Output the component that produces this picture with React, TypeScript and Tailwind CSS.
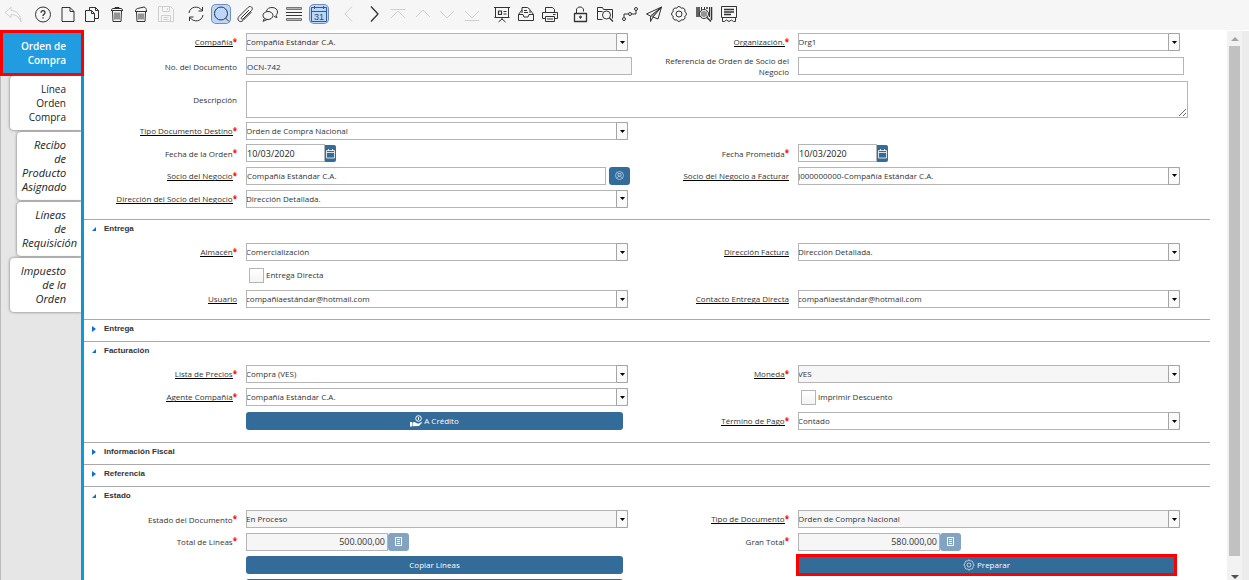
import type { ReactNode } from 'react'
import clsx from 'clsx'

const icons = {
    undo: <path d="M7 2 1 7.5 7 12.5V9.5c4 0 7.500 1.500 10 7.500C17 10.500 13 5.500 7 5.500z" />,
    help: (
        <>
            <circle cx="9" cy="9.500" r="7.500" />
            <path d="M7 7.800c0-3 4.200-2.700 4 0-.1 1.500-2 1.500-2 3.200M9 12.300v1.200" strokeWidth="1.300" />
        </>
    ),
    file: <path d="M3 2.500h8l4 4v10H3zM11 2.500v4h4" />,
    copy: (
        <>
            <path d="M2.500 5.500h6l3 3v8h-9zM8.500 5.500v3h3" />
            <path d="M6.500 5.500v-3h6l3 3v8h-4M12.500 2.500v3h3" />
        </>
    ),
    trash: (
        <>
            <path d="M3 5.500h12M4.500 5.500l.5 11h8l.5-11M3.500 5.500c0-1.500.500-2 1.500-2h8c1 0 1.500.5 1.500 2M7 3.500v-1h4v1" />
            <path d="M7 7.500v7M9 7.500v7M11 7.500v7" />
        </>
    ),
    trashFull: (
        <>
            <path d="M3 6.500h12M4.500 6.500l.5 10h8l.5-10M3.500 6c0-1.500 1-2 2-2.500L12 2c1.500 0 2.500 2 2.500 4" />
            <path d="M7 8.500v6M9 8.500v6M11 8.500v6" />
        </>
    ),
    save: (
        <>
            <path d="M1.500 1.500h12l3 3v12h-15z" />
            <path d="M5.500 1.500v5h7v-5M10.500 3v2M4.500 16.500v-6h9v6M6.500 12.500h5M6.500 14.500h5" />
        </>
    ),
    refresh: (
        <>
            <path d="M2 8c.8-6.500 9.500-8 13-2.500M16 10c-.8 6.500-9.500 8-13 2.500" />
            <path d="M15.500 2v4h-4M2.500 16v-4h4" />
        </>
    ),
    search: (
        <>
            <circle cx="9" cy="8.500" r="6.500" />
            <path d="m13.500 13 3.500 3.500" />
        </>
    ),
    clip: <path d="m13 5-7.500 7.500c-1 1 .500 2.500 1.500 1.500l8.500-8.500c2.500-2.500-1-5.500-3.300-3.200L3 11.500c-3 3 1 7 4 4l8.500-8.500" />,
    chat: (
        <>
            <path d="M5.500 6C6 3.500 8.500 2.500 11 2.500c3.500 0 5.500 2 5.500 4.500 0 1.500-.700 2.500-1.500 3.200l1 2.300-3-1" />
            <ellipse cx="7" cy="10.500" rx="5" ry="4" />
            <path d="m3.500 13.300-1.500 3 4-1.700" />
        </>
    ),
    list: (
        <>
            <path d="M1.500 2.500h15v2h-15zM1.500 13.500h15v2h-15z" fill="#b5b5b5" stroke="#777" />
            <path d="M1 7.500h16M1 10.500h16" />
        </>
    ),
    calendar: (
        <>
            <path d="M1.500 2.500h15v14h-15zM1.500 6.500h15M4.500 1v3M13.500 1v3" stroke="#365b8c" />
            <text x="9" y="15" textAnchor="middle" fontSize="9" fill="#2f4a70" stroke="none" fontFamily="Liberation Sans">31</text>
        </>
    ),
    prev: <path d="M12 1.500 5 9l7 7.500" />,
    next: <path d="m6 1.500 7 7.500-7 7.500" strokeWidth="1.300" />,
    first: <path d="M1.500 4.500h15M2 13l7-7 7 7" />,
    up: <path d="m2 12 7-7 7 7" />,
    down: <path d="m2 6 7 7 7-7" />,
    last: <path d="M1.500 15.500h15M2 6l7 7 7-7" />,
    board: (
        <>
            <path d="M1 2.500h16M2.500 3v9.500h13V3M1.500 12.500h15M9 12.500v2M5.500 17l3.500-3 3.500 3" />
            <path d="M5.500 6h3v3.500h-3zM10.500 6.500h3M10.500 9h3" strokeWidth="1.200" />
        </>
    ),
    inbox: (
        <>
            <path d="M1.500 9.500h4.500l1 2.500h4l1-2.500h4.500v6h-15zM1.500 9.500l3-4h1M16.500 9.500l-3-4" />
            <path d="M5 8V2.500h5.500l2.500 2V8M7 5.500h3M7 7.500h4" />
        </>
    ),
    printer: (
        <>
            <path d="M4.500 7V2.500h7l2 2V7M4 13.500H1.500v-6h15v6H14M3 7.500h12" />
            <path d="M4.500 11.500h9v5h-9zM6 14h6M12 9.500h2.500" />
        </>
    ),
    lock: (
        <>
            <path d="M3.500 8.500h12v8h-12z" strokeWidth="1.300" />
            <path d="M5.500 8.500V5c0-4 7-4 7 0v1.500M9.500 11.500v2" />
            <circle cx="9.500" cy="12" r="1" />
        </>
    ),
    folder: (
        <>
            <path d="M1.500 14.500v-12h5l1 2h9v9M1.500 14.500h5M1.500 6.500h5" />
            <circle cx="10.500" cy="10" r="4" />
            <path d="m13.500 13 3.500 3.500" strokeWidth="1.300" />
        </>
    ),
    flow: (
        <>
            <circle cx="3" cy="14" r="1.500" />
            <circle cx="9" cy="9" r="1.500" />
            <circle cx="15" cy="4" r="1.500" />
            <path d="M3 12.500V9h4.500M10.500 9H15V5.500" />
        </>
    ),
    plane: <path d="M16.500 2 1.500 9l4 2zM16.500 2 13 14l-5-2zM5.500 11v5.500l2.500-4.500M16.500 2 6.500 12" />,
    gear: (
        <>
            <path d="M14.730 6.630a2.500 2.500 0 0 1 0 4.740 2.500 2.500 0 0 1-3.360 3.360 2.500 2.500 0 0 1-4.740 0 2.500 2.500 0 0 1-3.360-3.360 2.500 2.500 0 0 1 0-4.740 2.500 2.500 0 0 1 3.360-3.360 2.500 2.500 0 0 1 4.740 0 2.500 2.500 0 0 1 3.360 3.360z" />
            <circle cx="9" cy="9" r="3" />
        </>
    ),
    barcode: (
        <>
            <path d="M2 2v10M4 2v10M12 2v2M16.500 2v13" strokeWidth="1.500" />
            <path d="M6.500 2v3M9.500 2v2M14.500 2v10" />
            <circle cx="9" cy="9" r="4.500" />
            <path d="M7 6.500v5M9 6v6M11 6.500v5" />
            <path d="m12 12.500 4 4" strokeWidth="1.500" />
        </>
    ),
    receipt: (
        <>
            <path d="M1.500 1.500h15v11h-15zM2.500 12.500v4h2l2-1.500 2.500 1.500 2.500-1.500 2 1.500h2v-4" />
            <path d="M4 4.500h10M4 7h10M4 9.500h7" strokeWidth="1.500" />
        </>
    ),
}

type IconName = keyof typeof icons
type Tool = [IconName, string, ('off' | 'on')?]

const toolbar: { width: string; tools: Tool[] }[] = [
    { width: 'w-6', tools: [['undo', 'Deshacer', 'off']] },
    {
        width: 'w-[147px]',
        tools: [
            ['help', 'Ayuda'], ['file', 'Nuevo'], ['copy', 'Copiar'],
            ['trash', 'Eliminar'], ['trashFull', 'Eliminar selección'], ['save', 'Guardar', 'off'],
        ],
    },
    {
        width: 'w-[147px]',
        tools: [
            ['refresh', 'Refrescar'], ['search', 'Buscar', 'on'], ['clip', 'Adjunto'],
            ['chat', 'Chat'], ['list', 'Cuadrícula'], ['calendar', 'Calendario', 'on'],
        ],
    },
    {
        width: 'w-[147px]',
        tools: [
            ['prev', 'Padre', 'off'], ['next', 'Detalle'], ['first', 'Primero', 'off'],
            ['up', 'Anterior', 'off'], ['down', 'Siguiente', 'off'], ['last', 'Último', 'off'],
        ],
    },
    { width: 'w-[72px]', tools: [['board', 'Informe'], ['inbox', 'Archivo'], ['printer', 'Imprimir']] },
    {
        width: 'w-[173px]',
        tools: [
            ['lock', 'Bloquear'], ['folder', 'Acercar'], ['flow', 'Flujo'], ['plane', 'Solicitud'],
            ['gear', 'Proceso'], ['barcode', 'Producto'], ['receipt', 'Recibo'],
        ],
    },
]

const tabs = [
    { name: 'Línea Orden Compra', className: 'ml-[10px]' },
    { name: 'Recibo de Producto Asignado', className: 'ml-[17px] text-[11px] italic' },
    { name: 'Líneas de Requisición', className: 'ml-[17px] text-[11px] italic' },
    { name: 'Impuesto de la Orden', className: 'ml-[10px] text-[11px] italic' },
]

function Icon({ name, className }: { name: IconName; className?: string }) {
    return (
        <svg viewBox="0 0 18 18" className={clsx('shrink-0', className)} fill="none" stroke="currentColor" strokeLinejoin="round">
            {icons[name]}
        </svg>
    )
}

function Toolbar() {
    return (
        <header className="flex h-[30px] shrink-0 items-center gap-[6px] bg-[#f6f6f6] pb-[2px] pl-px">
            {toolbar.map((group, i) => (
                <div key={i} className={clsx('flex justify-between', group.width)}>
                    {group.tools.map(([name, title, state]) => (
                        <button
                            key={name}
                            type="button"
                            aria-label={title}
                            disabled={state === 'off'}
                            className="flex h-6 w-6 items-center justify-center text-[#333] disabled:text-[#cfcfcf]"
                        >
                            <span className={clsx('rounded-sm', state === 'on' && 'bg-[#bdd7fb] ring-1 ring-[#6d8fbf]')}>
                                <Icon name={name} className="h-[18px] w-[18px]" />
                            </span>
                        </button>
                    ))}
                </div>
            ))}
        </header>
    )
}

function Sidebar() {
    return (
        <nav className="flex w-[84px] shrink-0 flex-col border-r-[3px] border-[#0a9bd8] bg-[#e6e6e6] text-right text-[10px] leading-[14px] text-[#222]">
            <button type="button" className="relative -mr-[3px] border-[3px] border-[#fa0000] bg-[#229ce0] py-[6px] pr-[15px] pl-3 text-right font-semibold text-white">
                Orden de Compra
            </button>
            <div className="flex flex-1 flex-col gap-[2px] border-l border-[#bbb]">
                {tabs.map((tab) => (
                    <button
                        key={tab.name}
                        type="button"
                        className={clsx('-translate-x-px -mr-px rounded-l-[4px] bg-white py-[6px] pr-[15px] pl-[5px] text-right shadow-[0_0_3px_#666]', tab.className)}
                    >
                        {tab.name}
                    </button>
                ))}
            </div>
        </nav>
    )
}

function Field({ id, label, link, required, className, children }: {
    id?: string
    label?: string
    link?: boolean
    required?: boolean
    className?: string
    children?: ReactNode
}) {
    return (
        <div className={clsx('flex items-center gap-[9px] pl-6', className)}>
            <label htmlFor={id} className="flex w-[129px] shrink-0 justify-end text-right leading-[11px]">
                <span className={clsx(link && 'border-b border-black leading-[9px]')}>{label}</span>
                {required && <span className="-mt-px font-bold text-[#f00]">*</span>}
            </label>
            <div className="flex min-w-0 flex-1 items-center">{children}</div>
        </div>
    )
}

const box = 'h-[18px] border border-[#b5b5b5] bg-white text-[#333] outline-none read-only:bg-[#f6f6f6]'

function Combo({ id, value, disabled }: { id: string; value: string; disabled?: boolean }) {
    return (
        <div className="relative mr-2 flex-1">
            <select
                id={id}
                disabled={disabled}
                className="block h-[18px] w-full appearance-none border border-[#b5b5b5] bg-white pr-3 -indent-px text-[#333] disabled:bg-[#f6f6f6] disabled:opacity-100"
            >
                <option>{value}</option>
            </select>
            <span className="pointer-events-none absolute top-0 right-0 flex h-[18px] w-3 items-center justify-center rounded-r-[2px] border border-[#a5a5a5] bg-[#fafafa]">
                <svg viewBox="0 0 5 3" className="h-[3px] w-[5px]"><path d="M0 0h5L2.500 3z" /></svg>
            </span>
        </div>
    )
}

function DateBox({ id }: { id: string }) {
    return (
        <>
            <input id={id} defaultValue="10/03/2020" className="h-[18px] w-[79px] border border-[#b5b5b5] text-[9px] text-[#222]" />
            <button type="button" aria-label="Abrir calendario" className="flex h-[17px] w-[11px] items-center justify-center rounded-r-[2px] bg-[#336b99] text-white">
                <svg viewBox="0 0 9 11" className="h-[11px] w-[9px]" fill="none" stroke="currentColor" strokeWidth=".8">
                    <path d="M.5 2.500h8v7.500h-8zM.5 4.500h8M2.500 1v2M6.500 1v2" />
                </svg>
            </button>
        </>
    )
}

function Amount({ id, value }: { id: string; value: string }) {
    return (
        <>
            <input id={id} readOnly defaultValue={value} className={clsx(box, 'w-[142px] pr-[2px] text-right text-[9px]')} />
            <button type="button" disabled aria-label="Calculadora" className="flex h-[18px] w-[21px] items-center justify-center rounded-[3px] bg-[#82a4c2] text-white">
                <svg viewBox="0 0 8 9" className="h-[9px] w-2" fill="none" stroke="currentColor">
                    <path d="M.5.5h6v8h-6zM2 2.500h3M2 4.500h3M2 6.500h3" />
                </svg>
            </button>
        </>
    )
}

function Action({ children, className, label }: { children?: ReactNode; className?: string; label?: string }) {
    return (
        <button
            type="button"
            aria-label={label}
            className={clsx('mr-[13px] flex h-[18px] flex-1 items-center justify-center gap-[2px] bg-[#336b99] text-white', className ?? 'rounded-[3px]')}
        >
            {children}
        </button>
    )
}

function Check({ id, label }: { id: string; label: string }) {
    return (
        <div className="flex items-center gap-[2px] pl-[3px]">
            <input id={id} type="checkbox" className="h-[15px] w-[15px] appearance-none border border-[#b5b5b5] bg-linear-to-b from-white to-[#f4f4f4]" />
            <label htmlFor={id}>{label}</label>
        </div>
    )
}

function Row({ className, children }: { className: string; children: ReactNode }) {
    return <div className={clsx('mr-[22px] grid grid-cols-2', className)}>{children}</div>
}

function Section({ title, className, children }: { title: string; className?: string; children?: ReactNode }) {
    return (
        <section className={clsx('border-t border-[#a9a9a9]', className)}>
            <button type="button" aria-expanded={!!children} className="flex h-[21px] items-center gap-2 pb-[3px] pl-2 font-['Liberation_Sans',sans-serif] font-bold">
                <svg viewBox="0 0 4 6" className="h-[6px] w-1 fill-[#0a6fd0]">
                    <path d={children ? 'M4 1v4H0z' : 'M0 0l4 3-4 3z'} />
                </svg>
                {title}
            </button>
            {children}
        </section>
    )
}

function Scrollbar() {
    return (
        <div aria-hidden="true" className="mt-px flex w-[22px] shrink-0 bg-[#ececec]">
            <div className="flex w-[15px] flex-col items-center bg-[#f2f2f2]">
                <svg viewBox="0 0 8 15" className="h-[15px] w-2 fill-[#a3a3a3]"><path d="M0 10l4-4 4 4z" /></svg>
                <div className="w-[11px] flex-1 bg-[#c1c1c1]" />
                <svg viewBox="0 0 8 24" className="h-6 w-2 fill-[#505050]"><path d="M0 19h8l-4 4z" /></svg>
            </div>
        </div>
    )
}

export default function App() {
    return (
        <div className="flex h-screen flex-col overflow-hidden bg-white font-['Open_Sans','Noto_Sans',sans-serif] text-[8px] text-[#333]">
            <Toolbar />
            <div className="flex min-h-0 flex-1">
                <Sidebar />
                <main className="mr-[17px] min-w-0 flex-1 overflow-hidden">
                    <div className="pb-[9px]">
                        <Row className="h-6">
                            <Field id="company" label="Compañía" link required>
                                <Combo id="company" value="Compañía Estándar C.A." disabled />
                            </Field>
                            <Field id="org" label="Organización." link required>
                                <Combo id="org" value="Org1" />
                            </Field>
                        </Row>
                        <Row className="h-6">
                            <Field id="docno" label="No. del Documento">
                                <input id="docno" readOnly defaultValue="OCN-742" className={clsx(box, 'mr-1 min-w-0 flex-1')} />
                            </Field>
                            <Field id="ref" label="Referencia de Orden de Socio del Negocio">
                                <input id="ref" className={clsx(box, 'mr-1 min-w-0 flex-1')} />
                            </Field>
                        </Row>
                        <Row className="h-[42px]">
                            <Field id="desc" label="Descripción" className="col-span-2">
                                <textarea id="desc" className="h-[37px] flex-1 border border-[#b5b5b5]" />
                            </Field>
                        </Row>
                        <Row className="h-[22px]">
                            <Field id="target" label="Tipo Documento Destino" link required>
                                <Combo id="target" value="Orden de Compra Nacional" />
                            </Field>
                        </Row>
                        <Row className="h-[22px]">
                            <Field id="ordered" label="Fecha de la Orden" required>
                                <DateBox id="ordered" />
                            </Field>
                            <Field id="promised" label="Fecha Prometida" required>
                                <DateBox id="promised" />
                            </Field>
                        </Row>
                        <Row className="h-[23px]">
                            <Field id="partner" label="Socio del Negocio" link required>
                                <input id="partner" defaultValue="Compañía Estándar C.A." className={clsx(box, 'min-w-0 flex-1')} />
                                <button type="button" aria-label="Buscar socio" className="mr-[6px] ml-[3px] flex h-[18px] w-[21px] items-center justify-center rounded-[3px] bg-[#336b99] text-[#b8cfe4]">
                                    <svg viewBox="0 0 9 9" className="h-[9px] w-[9px]" fill="none" stroke="currentColor" strokeWidth=".8">
                                        <circle cx="4.500" cy="4.500" r="4" />
                                        <path d="M3 2.500h3v2.500H3zM2 7c1-2 4-2 5 0" />
                                    </svg>
                                </button>
                            </Field>
                            <Field id="billto" label="Socio del Negocio a Facturar" link>
                                <Combo id="billto" value="J000000000-Compañía Estándar C.A." />
                            </Field>
                        </Row>
                        <Row className="h-[23px]">
                            <Field id="address" label="Dirección del Socio del Negocio" link required>
                                <Combo id="address" value="Dirección Detallada." />
                            </Field>
                        </Row>
                    </div>

                    <Section title="Entrega" className="pb-2">
                        <Row className="h-[22px]">
                            <Field id="warehouse" label="Almacén" link required>
                                <Combo id="warehouse" value="Comercialización" />
                            </Field>
                            <Field id="billaddress" label="Dirección Factura" link>
                                <Combo id="billaddress" value="Dirección Detallada." />
                            </Field>
                        </Row>
                        <Row className="h-6">
                            <Field>
                                <Check id="dropship" label="Entrega Directa" />
                            </Field>
                        </Row>
                        <Row className="h-6">
                            <Field id="user" label="Usuario" link>
                                <Combo id="user" value="compañíaestándar@hotmail.com" />
                            </Field>
                            <Field id="contact" label="Contacto Entrega Directa" link>
                                <Combo id="contact" value="compañíaestándar@hotmail.com" />
                            </Field>
                        </Row>
                    </Section>

                    <Section title="Entrega" />

                    <Section title="Facturación" className="pb-[9px]">
                        <Row className="h-[22px]">
                            <Field id="pricelist" label="Lista de Precios" link required>
                                <Combo id="pricelist" value="Compra (VES)" />
                            </Field>
                            <Field id="currency" label="Moneda" link required>
                                <Combo id="currency" value="VES" disabled />
                            </Field>
                        </Row>
                        <Row className="h-6">
                            <Field id="agent" label="Agente Compañía" link required>
                                <Combo id="agent" value="Compañía Estándar C.A." />
                            </Field>
                            <Field>
                                <Check id="discount" label="Imprimir Descuento" />
                            </Field>
                        </Row>
                        <Row className="h-6">
                            <Field>
                                <Action>
                                    <svg viewBox="0 0 12 12" className="h-3 w-3" fill="none" stroke="currentColor">
                                        <circle cx="8.500" cy="3.500" r="2.800" />
                                        <path d="M8.500 2v3" />
                                        <path d="M0 7h2v4.500H0zM2.500 7.500l2-.5 3 1.500h1.500l2.500-1.500.5.8-3 3.200-6.500.3z" fill="currentColor" stroke="none" />
                                    </svg>
                                    A Crédito
                                </Action>
                            </Field>
                            <Field id="term" label="Término de Pago" link required>
                                <Combo id="term" value="Contado" />
                            </Field>
                        </Row>
                    </Section>

                    <Section title="Información Fiscal" />
                    <Section title="Referencia" />

                    <Section title="Estado">
                        <Row className="h-[22px]">
                            <Field id="status" label="Estado del Documento" required>
                                <Combo id="status" value="En Proceso" disabled />
                            </Field>
                            <Field id="doctype" label="Tipo de Documento" link required>
                                <Combo id="doctype" value="Orden de Compra Nacional" disabled />
                            </Field>
                        </Row>
                        <Row className="h-[23px]">
                            <Field id="lines" label="Total de Líneas" required>
                                <Amount id="lines" value="500.000,00" />
                            </Field>
                            <Field id="total" label="Gran Total" required>
                                <Amount id="total" value="580.000,00" />
                            </Field>
                        </Row>
                        <Row className="h-[23px]">
                            <Field>
                                <Action>Copiar Líneas</Action>
                            </Field>
                            <Field>
                                <Action className="rounded-none outline-[3px] -outline-offset-1 outline-[#fa0000]">
                                    <Icon name="gear" className="h-3 w-3" />
                                    Preparar
                                </Action>
                            </Field>
                        </Row>
                        <Row className="h-[23px]">
                            <Field>
                                <Action label="Cerrar" />
                            </Field>
                        </Row>
                    </Section>
                </main>
                <Scrollbar />
            </div>
        </div>
    )
}
